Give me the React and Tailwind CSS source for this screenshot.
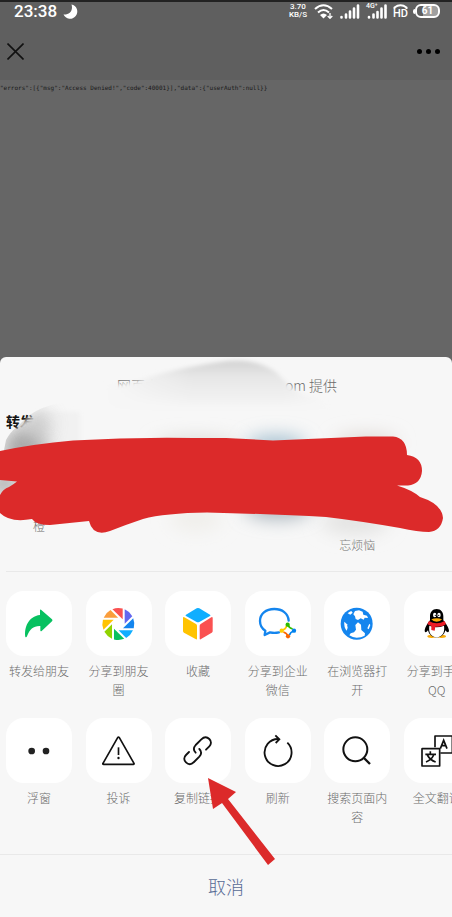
import React from "react";

const APERTURE = ["#fa5151", "#6467ef", "#1485ee", "#10aeff", "#07c160", "#91d300", "#ffc300", "#fa9d3b"];

function Icon({ box, children }) {
  return (
    <svg viewBox={box} className="h-9 w-9 overflow-visible" fill="none" aria-hidden="true">
      {children}
    </svg>
  );
}

const ForwardIcon = () => (
  <Icon box="62 77 108 108">
    <path
      d="M119 89Q119 86 122 88L155 117Q158 120 155 123L124 152Q120 155 120 150V137C100 136 88 146 80 168Q78 173 75 170C71 142 84 108 119 104Z"
      fill="#07c160"
    />
  </Icon>
);

const MomentsIcon = () => (
  <Icon box="302 77 108 108">
    <g transform="translate(354 131)">
      {APERTURE.map((color, i) => (
        <path key={color} d="M13 -14V-46.2A48 48 0 0 0 -17.6 -44.6Z" fill={color} transform={`rotate(${i * 45})`} />
      ))}
    </g>
  </Icon>
);

const FavoriteIcon = () => (
  <Icon box="540 77 108 108">
    <path d="M590 84Q594 82 598 84L630 103Q633 105 630 107L598 125Q594 127 590 125L558 107Q555 105 558 103Z" fill="#10aeff" />
    <path d="M549 113Q549 109 553 111L588 131Q591 133 591 136V175Q591 178 588 177L552 157Q549 155 549 152Z" fill="#ffc300" />
    <path d="M638 113Q638 109 634 111L602 131Q599 133 599 136V175Q599 178 602 177L635 157Q638 155 638 152Z" fill="#fa5151" />
  </Icon>
);

const WorkChatIcon = () => (
  <Icon box="101 77 108 108">
    <path
      d="M187 121C186 99 167 86 144 86C118 86 101 101 101 122C101 135 107 145 117 151L115 164L131 156Q144 159 158 156"
      stroke="#1485ee"
      strokeWidth="7"
      strokeLinecap="round"
      strokeLinejoin="round"
    />
    <path d="M184 133L203 151L185 168L166 151Z" fill="#fff" />
    <path d="M184 133Q188 143 199 146" stroke="#2dbc00" strokeWidth="5" />
    <path d="M203 151Q192 155 189 165" stroke="#0082ef" strokeWidth="5" />
    <path d="M185 168Q182 158 171 155" stroke="#fb6500" strokeWidth="5" />
    <path d="M166 151Q178 147 181 137" stroke="#ffcc00" strokeWidth="5" />
    <circle cx="184" cy="133" r="6.500" fill="#2dbc00" />
    <circle cx="203" cy="151" r="6.500" fill="#0082ef" />
    <circle cx="185" cy="168" r="6.500" fill="#fb6500" />
    <circle cx="166" cy="151" r="6.500" fill="#ffcc00" />
  </Icon>
);

const GlobeIcon = () => (
  <Icon box="340 77 108 108">
    <circle cx="393" cy="130" r="48" fill="#1485ee" />
    <path
      d="M383 102L388 92L400 90L411 94L413 103L424 106L427 113L417 112L414 118L405 114L397 119L390 116L388 108Z"
      fill="#fff"
    />
    <path d="M366 99Q370 94 377 92L381 97L374 103Z" fill="#fff" />
    <path
      d="M389 134L397 126L406 133L407 149L418 159L417 166Q407 172 393 172Q381 172 371 165L375 159L385 156L391 148Z"
      fill="#fff"
    />
    <path d="M356 124L364 132L366 142L363 151Q354 139 356 124Z" fill="#fff" />
    <path d="M431 130L434 134L429 147L425 144Z" fill="#fff" />
  </Icon>
);

const QQIcon = () => (
  <Icon box="578 77 108 108">
    <ellipse cx="616" cy="168" rx="13" ry="5" fill="#faab07" />
    <ellipse cx="646" cy="168" rx="13" ry="5" fill="#faab07" />
    <path
      d="M631 86C618 86 611 96 611 108V120C603 130 595 143 595 152Q597 160 605 150C608 163 617 171 631 171C645 171 654 163 657 150Q665 160 668 152C668 143 659 130 651 120V108C651 96 644 86 631 86Z"
      fill="#000"
    />
    <path d="M609 136Q631 146 653 136C656 157 648 170 631 170C614 170 606 157 609 136Z" fill="#fff" />
    <path d="M608 122Q631 136 655 122L659 131Q648 141 627 139L625 151L615 149V137Q607 134 603 131Z" fill="#eb1c26" />
    <ellipse cx="625" cy="104" rx="5" ry="7" fill="#fff" />
    <ellipse cx="638" cy="104" rx="5" ry="7" fill="#fff" />
    <circle cx="627" cy="105" r="2" fill="#000" />
    <circle cx="637" cy="105" r="2" fill="#000" />
    <path d="M615 117Q631 111 647 117Q642 124 631 124Q620 124 615 117Z" fill="#faab07" />
  </Icon>
);

const FloatIcon = () => (
  <Icon box="62 83 108 108">
    <circle cx="94" cy="137" r="10" fill="#222" />
    <circle cx="137" cy="137" r="10" fill="#222" />
  </Icon>
);

const ReportIcon = () => (
  <Icon box="302 83 108 108">
    <path d="M352 97Q354 94 357 97L401 174Q402 177 399 177H310Q306 177 308 174Z" stroke="#111" strokeWidth="5" strokeLinejoin="round" />
    <path d="M354.500 126V149" stroke="#111" strokeWidth="5" />
    <circle cx="354.500" cy="158" r="3.500" fill="#111" />
  </Icon>
);

const LinkIcon = () => (
  <Icon box="541 83 108 108">
    <g stroke="#111" strokeWidth="5.500" strokeLinecap="round">
      <path d="M588 142C580 134 580 128 588 119L605 102C613 94 622 94 629 101C636 108 635 117 629 123L619 133" />
      <path d="M599 131C607 139 607 145 599 154L583 170C575 178 566 178 559 171C552 164 552 156 559 149L568 140" />
    </g>
  </Icon>
);

const RefreshIcon = () => (
  <Icon box="101 83 108 108">
    <path d="M183 112A40.500 40.500 0 1 1 157 101" stroke="#111" strokeWidth="5.500" />
    <path d="M147 90L159 102L148 113" stroke="#111" strokeWidth="5.500" />
  </Icon>
);

const SearchIcon = () => (
  <Icon box="340 83 108 108">
    <circle cx="389" cy="132" r="36" stroke="#111" strokeWidth="6" />
    <path d="M415 158L433 176" stroke="#111" strokeWidth="7" />
  </Icon>
);

const TranslateIcon = () => (
  <Icon box="578 83 108 108">
    <path d="M626 126V92H678V143H642" stroke="#111" strokeWidth="5" strokeLinejoin="round" />
    <path d="M642 130L652 105L662 130M645 121H659" stroke="#111" strokeWidth="5" />
    <rect x="587" y="130" width="53" height="52" rx="1" stroke="#111" strokeWidth="5" />
    <path d="M612 138V146M597 147H629M622 149Q616 163 599 170M603 149Q611 164 628 170" stroke="#111" strokeWidth="5" />
  </Icon>
);

const SHARE = [
  { label: "转发给朋友", icon: <ForwardIcon /> },
  { label: "分享到朋友圈", icon: <MomentsIcon /> },
  { label: "收藏", icon: <FavoriteIcon /> },
  { label: "分享到企业微信", icon: <WorkChatIcon /> },
  { label: "在浏览器打开", icon: <GlobeIcon /> },
  { label: "分享到手机QQ", icon: <QQIcon /> },
];

const TOOLS = [
  { label: "浮窗", icon: <FloatIcon /> },
  { label: "投诉", icon: <ReportIcon /> },
  { label: "复制链接", icon: <LinkIcon /> },
  { label: "刷新", icon: <RefreshIcon /> },
  { label: "搜索页面内容", icon: <SearchIcon /> },
  { label: "全文翻译", icon: <TranslateIcon /> },
];

function ActionRow({ items }) {
  return (
    <div className="flex gap-[3vw] overflow-hidden pl-[6px]">
      {items.map((item) => (
        <button key={item.label} type="button" className="flex w-[66px] shrink-0 flex-col items-center">
          <span className="flex h-[65px] w-full items-center justify-center rounded-[18px] bg-white">{item.icon}</span>
          <span className="mt-[5px] block w-full text-center text-[12px] leading-[19px] text-[#6c6c6c]">{item.label}</span>
        </button>
      ))}
    </div>
  );
}

function StatusBar() {
  return (
    <div className="flex h-[18px] items-center pl-[14px] pr-3 text-white">
      <span className="font-[Roboto] text-[17px] font-medium leading-[18px]">23:38</span>
      <svg viewBox="0 0 15 15" className="ml-[6px] h-[15px] w-[15px]" aria-label="勿扰">
        <path d="M8.500 0.500A7.200 7.200 0 1 1 0.500 10.500C6 11 10.500 7 8.500 0.500Z" fill="#fff" />
      </svg>
      <div className="ml-auto flex items-center">
        <div className="text-center font-[Roboto] text-[8px] font-medium leading-[8px]">
          <div>3.70</div>
          <div>KB/S</div>
        </div>
        <svg viewBox="0 0 19 15" className="ml-[7px] h-[15px] w-[19px]" fill="none" stroke="#fff" strokeWidth="2" aria-hidden="true">
          <path d="M1 5Q9.500 -2.500 18 5M4 8.500Q9.500 3.500 15 8.500" />
          <path d="M6 11Q9.500 8 13 11L9.500 14.500Z" fill="#fff" stroke="none" />
          <path d="M16 9V14M13.700 12L16 14.300L18.300 12" strokeWidth="1.300" />
        </svg>
        <svg viewBox="0 0 20 15" className="ml-[7px] h-[15px] w-5" stroke="#fff" strokeWidth="2.600" strokeLinecap="round" aria-hidden="true">
          <path d="M1.500 13V13.500M6 10.500V13.500M10 7.500V13.500M14 4.500V13.500M18 1.500V13.500" />
        </svg>
        <div className="relative ml-[6px] flex">
          <svg viewBox="0 0 21 15" className="h-[15px] w-[21px]" stroke="#fff" strokeWidth="2.600" strokeLinecap="round" aria-hidden="true">
            <path d="M3 13V13.500M7.500 10.500V13.500M11.500 8V13.500M15.500 4.500V13.500M19.500 1.500V13.500" />
          </svg>
          <span className="absolute -top-px left-0 font-[Roboto] text-[7px] font-medium leading-[7px]">4G⁺</span>
        </div>
        <div className="ml-[6px] flex w-[15px] flex-col items-center">
          <svg viewBox="0 0 15 5" className="h-[5px] w-[15px]" fill="none" stroke="#fff" strokeWidth="2" aria-hidden="true">
            <path d="M1.500 5V3.500Q7.500 -1 13.500 3.500V5" />
          </svg>
          <span className="font-[Roboto] text-[11px] font-medium leading-[10px]">HD</span>
        </div>
        <div className="ml-[5px] flex items-center">
          <span className="h-[5px] w-[2px] rounded-l bg-white" />
          <span className="flex h-[14px] w-[25px] items-center justify-center rounded-[6px] border-2 border-white bg-gradient-to-r from-[#5f5f5f] from-30% to-[#a0a0a0] to-30% font-[Roboto] text-[10px] font-bold leading-[10px]">
            61
          </span>
        </div>
      </div>
    </div>
  );
}

function Scribble() {
  return (
    <svg
      viewBox="0 357 452 214"
      preserveAspectRatio="none"
      className="pointer-events-none absolute inset-0 h-full w-full"
      aria-hidden="true"
    >
      <defs>
        <filter id="soft" filterUnits="userSpaceOnUse" x="-40" y="340" width="540" height="240">
          <feGaussianBlur stdDeviation="2" />
        </filter>
        <filter id="haze" filterUnits="userSpaceOnUse" x="-60" y="340" width="580" height="260">
          <feGaussianBlur stdDeviation="9" />
        </filter>
        <linearGradient id="crest" x1="0" y1="361" x2="0" y2="410" gradientUnits="userSpaceOnUse">
          <stop offset="0" stopColor="#d3d3d3" />
          <stop offset="0.300" stopColor="#e6e6e6" />
          <stop offset="1" stopColor="#f7f7f7" />
        </linearGradient>
        <linearGradient id="crestFade" x1="105" y1="0" x2="190" y2="0" gradientUnits="userSpaceOnUse">
          <stop offset="0" stopColor="#f7f7f7" />
          <stop offset="1" stopColor="#f7f7f7" stopOpacity="0" />
        </linearGradient>
        <linearGradient id="crestEnd" x1="285" y1="0" x2="335" y2="0" gradientUnits="userSpaceOnUse">
          <stop offset="0" stopColor="#f7f7f7" stopOpacity="0" />
          <stop offset="1" stopColor="#f7f7f7" />
        </linearGradient>
        <clipPath id="swoosh">
          <path d="M0 470L6 440Q10 432 17 427L28 416Q42 406 60 403L120 395L452 430V571H0Z" />
        </clipPath>
      </defs>
      <g filter="url(#soft)">
        <path d="M104 387L138 381Q170 369 226 361Q255 358 276 372L290 386Q302 396 330 404L344 412L290 440H104Z" fill="url(#crest)" />
        <path d="M104 387L138 381Q170 369 226 361V440H104Z" fill="url(#crestFade)" />
        <path d="M285 384Q302 396 330 404L344 412L290 440H285Z" fill="url(#crestEnd)" />
        <path d="M16 446L18 430L22 423L30 419L42 411L80 412V446Z" fill="#f1f1f1" />
      </g>
      <g clipPath="url(#swoosh)">
        <ellipse cx="24" cy="448" rx="22" ry="20" fill="#8f8f8f" opacity="0.750" filter="url(#haze)" />
        <ellipse cx="38" cy="424" rx="12" ry="14" fill="#c0c0c0" opacity="0.800" filter="url(#haze)" />
      </g>
      <ellipse cx="4" cy="484" rx="14" ry="10" fill="#777" opacity="0.700" filter="url(#haze)" />
      <ellipse cx="196" cy="446" rx="42" ry="8" fill="#d8d8d2" filter="url(#haze)" />
      <ellipse cx="276" cy="445" rx="30" ry="9" fill="#9fbccd" filter="url(#haze)" />
      <ellipse cx="366" cy="443" rx="32" ry="8" fill="#dcd5d0" filter="url(#haze)" />
      <ellipse cx="278" cy="508" rx="34" ry="11" fill="#a9b4bc" filter="url(#haze)" />
      <ellipse cx="196" cy="518" rx="26" ry="14" fill="#f0efeb" filter="url(#haze)" />
      <ellipse cx="355" cy="522" rx="34" ry="12" fill="#e2e2e1" filter="url(#haze)" />
      <path
        d="M0 451Q33 444 73 440.500Q133 437 193 438L226 438L273 440.500L366 436.500H393Q407 438 407 455Q422 457 422 471Q421 484 408 485.500H397Q412 490 420 497Q442 504 443 518Q441 531 429 532Q418 532 400 528Q360 521 326 517Q273 514 207 512.500Q165 513 143 519Q125 525 110 531Q93 537 89 521L50 525Q36 525 32 519Q10 523 0 513V495Q3 489 9 487Q14 484 17 481.500L0 480Z"
        fill="#dc2a2a"
      />
    </svg>
  );
}

export default function App() {
  return (
    <div className="flex min-h-screen flex-col overflow-hidden bg-[#666] font-['Noto_Sans_CJK_SC',sans-serif] font-light">
      <header className="border-t-2 border-[#222] bg-[#5f5f5f]">
        <StatusBar />
        <div className="flex h-[60px] items-center justify-between pl-[7px] pr-3 pt-[3px]">
          <button type="button" aria-label="关闭">
            <svg viewBox="0 0 17 17" className="h-[17px] w-[17px]" stroke="#111" strokeWidth="1.600" aria-hidden="true">
              <path d="M0.500 0.500L16.500 16.500M16.500 0.500L0.500 16.500" />
            </svg>
          </button>
          <button type="button" aria-label="更多" className="flex gap-1">
            <span className="h-[5px] w-[5px] rounded-full bg-black" />
            <span className="h-[5px] w-[5px] rounded-full bg-black" />
            <span className="h-[5px] w-[5px] rounded-full bg-black" />
          </button>
        </div>
      </header>

      <main className="flex-1 pt-1">
        <pre className="font-['DejaVu_Sans_Mono',monospace] text-[6px] font-normal leading-[7px] text-[#191919]">
          {'"errors":[{"msg":"Access Denied!","code":40001}],"data":{"userAuth":null}}'}
        </pre>
      </main>

      <section className="rounded-t-[6px] bg-[#f7f7f7]">
        <div className="relative h-[214px] overflow-hidden">
          <p className="flex justify-center gap-[126px] pl-[2px] pt-[18px] text-[14px] leading-5 text-[#6c6c6c]">
            <span>网页由</span>
            <span>om 提供</span>
          </p>
          <h2 className="mt-4 pl-[6px] text-[14px] font-bold leading-5 text-[#111]">转发</h2>
          <div className="mt-[14px] flex gap-[3vw] pl-[6px] text-center text-[12px] leading-[19px] text-[#6c6c6c]">
            <span className="w-[66px] shrink-0 pt-[71px]">橙</span>
            <span className="w-[66px] shrink-0" />
            <span className="w-[66px] shrink-0" />
            <span className="w-[66px] shrink-0" />
            <span className="w-[66px] shrink-0 pt-[90px]">忘烦恼</span>
          </div>
          <Scribble />
        </div>

        <div className="ml-[6px] border-t border-[#e9e9e9]" />

        <div className="relative pt-[19px]">
          <ActionRow items={SHARE} />
          <div className="h-[19px]" />
          <ActionRow items={TOOLS} />
          <svg
            viewBox="0 0 68 88"
            className="pointer-events-none absolute left-[46%] top-[206px] h-[88px] w-[68px]"
            fill="#dc2a2a"
            aria-hidden="true"
          >
            <path d="M0 0L28 14L20 21L67 81L60 87L14 25L5 31Z" />
          </svg>
        </div>

        <div className="mt-[28px] border-t border-[#e9e9e9]">
          <button type="button" className="block h-[62px] w-full text-[18px] leading-6 text-[#576b95]">
            取消
          </button>
        </div>
      </section>
    </div>
  );
}
